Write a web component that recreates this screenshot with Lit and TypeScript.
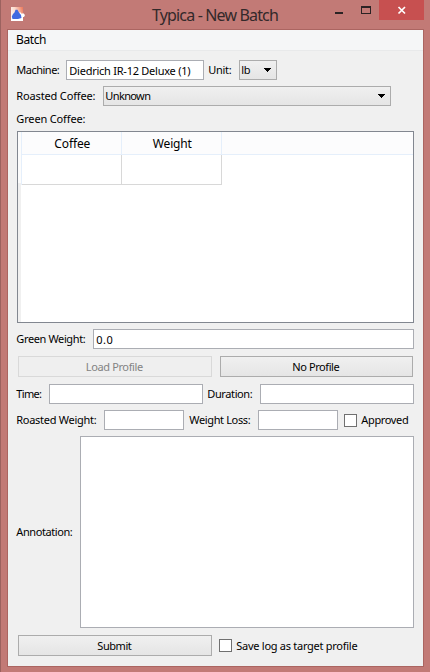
import { LitElement, html, css, svg } from "lit";
import { customElement, property } from "lit/decorators.js";

// A text run whose tracking is adjusted so that it fills a given width.
@customElement("fit-text")
class FitText extends LitElement {
  @property() text = "";
  @property({ type: Number }) w = 0;

  static styles = css`
    :host { display: inline-block; white-space: pre; flex: none; }
    .run { display: inline-block; }
  `;

  firstUpdated() {
    const run = this.renderRoot.querySelector(".run") as HTMLElement;
    const natural = run.getBoundingClientRect().width;
    run.style.letterSpacing = (this.w - natural) / this.text.length + "px";
    this.style.width = this.w + "px";
  }

  render() {
    return html`<span class="run">${this.text}</span>`;
  }
}

const t = (text: string, w: number) => html`<fit-text .text=${text} .w=${w}></fit-text>`;

const arrow = html`<svg class="arrow" width="7" height="4" viewBox="0 0 7 4" shape-rendering="crispEdges">
  ${svg`<path d="M0 0H7V1H6V2H5V3H4V4H3V3H2V2H1V1H0Z" fill="#000" />`}
</svg>`;

@customElement("app-root")
class AppRoot extends LitElement {
  static styles = css`
    * { box-sizing: border-box; }
    :host {
      display: block; width: 430px; height: 672px; overflow: hidden;
      font: 11px/14px "Noto Sans", "Open Sans", sans-serif; color: #000;
    }
    .window {
      width: 430px; height: 672px; background: #c27a76; border-left: 1px solid #9c625f;
      display: flex; flex-direction: column;
    }
    .titlebar { height: 29px; display: flex; align-items: flex-start; color: #33292a; flex: none; }
    .logo { display: block; margin: 7px 0 0 10px; }
    .title { font-size: 16px; line-height: 22px; margin: 4px 0 0 126px; }
    .controls { display: flex; margin-left: auto; margin-right: 5px; }
    .controls svg { display: block; }
    .client {
      margin-left: 6px; width: 417px; height: 638px; border: 1px solid #ab6561;
      background: #f0f0f0; display: flex; flex-direction: column; flex: none;
    }
    .menubar {
      height: 21px; background: #f5f6f7; border-bottom: 1px solid #e8e9ea; padding: 2px 0 0 8px;
      font-size: 12px; line-height: 16px; flex: none;
    }
    .form { padding: 9px 9px 0 9px; display: flex; flex-direction: column; }
    .form fit-text { margin-left: -0.7px; margin-right: 0.7px; }
    .row { display: flex; align-items: center; height: 20px; margin-bottom: 6px; flex: none; }
    .field { height: 20px; background: #fff; border: 1px solid #abadb3; padding: 3px 0 0 2px; line-height: 14px; flex: none; }
    .select {
      height: 20px; border: 1px solid #acacac; background: linear-gradient(#f0f0f0, #e5e5e5);
      display: flex; align-items: center; justify-content: space-between; padding: 0 5px 0 2px; flex: none;
    }
    .machine { width: 138px; margin-left: 6px; margin-right: 5px; padding-left: 3px; }
    .unit { width: 38px; margin-left: 7px; }
    .coffee { width: 288px; margin-left: 7px; }
    .heading { height: 14px; margin-bottom: 5px; }
    .table { width: 397px; height: 192px; border: 1px solid #828790; background: #fff; margin-bottom: 6px; flex: none; display: flex; }
    .gutter { width: 3px; background: #f0f0f0; }
    .gutter-head { height: 52px; background: #fcfcfc; border-bottom: 1px solid #f0f0f0; }
    .sheet { flex: 1; }
    .head { display: flex; height: 23px; border-bottom: 1px solid #e5effb; border-left: 1px solid #e5effb; background: #fcfcfd; font-size: 12px; }
    .head .cell { width: 100px; border-right: 1px solid #e5effb; display: flex; align-items: center; justify-content: center; }
    .head fit-text { margin: 2px 0 0 1.5px; }
    .body { display: flex; height: 30px; border-left: 1px solid #e5effb; }
    .body .cell { width: 100px; border-right: 1px solid #d8d8d8; border-bottom: 1px solid #d8d8d8; }
    .green { flex: 1; margin-left: 7px; padding-left: 3px; }
    .buttons { display: flex; gap: 8px; padding: 0 1px; margin: 1px 0 7px; align-items: center; height: 21px; flex: none; }
    .button {
      width: 194px; height: 21px; border: 1px solid #acacac; background: linear-gradient(#f0f0f0, #e5e5e5);
      display: flex; align-items: center; justify-content: center; flex: none;
    }
    .no-profile { width: 193px; }
    .disabled { background: #efefef; border-color: #d9d9d9; color: #838383; }
    .time { width: 154px; margin: 0 5px 0 7px; }
    .duration { width: 154px; margin-left: 7px; }
    .small { width: 80px; margin: 0 6px 0 7px; }
    .check { width: 13px; height: 13px; border: 1px solid #707070; background: #fff; margin-right: 5px; flex: none; }
    .note { height: 192px; margin-bottom: 6px; }
    .area { width: 334px; height: 192px; background: #fff; border: 1px solid #abadb3; margin-left: 7px; }
    .last { gap: 7px; }
    .save { display: flex; align-items: center; }
  `;

  render() {
    return html`
      <div class="window">
        <div class="titlebar">
          <svg class="logo" width="15" height="15" viewBox="0 0 15 15">
            <defs>
              <linearGradient id="sky" x1="0" y1="0.6" x2="1" y2="0.2">
                <stop offset="0" stop-color="#fff6f2" />
                <stop offset="0.45" stop-color="#fbd9cc" />
                <stop offset="1" stop-color="#ee7f62" />
              </linearGradient>
            </defs>
            <path d="M0 0H12V14H0Z" fill="url(#sky)" />
            <path d="M7 8L9 5L11 7L12 6L14 8L13 10L12 10V14H0V12Z" fill="#fff" />
            <path d="M4.5 2.8H6.5L8 5.5L10 8L10.5 11L7 12H1.5L0.8 9.5L2 7L3.5 5.5Z" fill="#4169e1" />
          </svg>
          <div class="title">${t("Typica - New Batch", 126)}</div>
          <div class="controls">
            <svg width="91" height="20" viewBox="0 0 91 20" shape-rendering="crispEdges">
              <rect x="1" y="12" width="8" height="2" fill="#2b2324" />
              <path d="M27 6H37V14H27ZM28 8V13H36V8Z" fill="#2b2324" fill-rule="evenodd" />
              <rect x="45" y="0" width="45" height="20" fill="#c75050" />
              <path d="M64.5 7L71 13.5M71 7L64.5 13.5" stroke="#fff" stroke-width="1.7" shape-rendering="auto" />
            </svg>
          </div>
        </div>
        <div class="client">
          <div class="menubar">${t("Batch", 30)}</div>
          <div class="form">
            <div class="row">
              ${t("Machine:", 43)}
              <div class="field machine">${t("Diedrich IR-12 Deluxe (1)", 121)}</div>
              ${t("Unit:", 23)}
              <div class="select unit">${t("lb", 9)}${arrow}</div>
            </div>
            <div class="row">
              ${t("Roasted Coffee:", 79)}
              <div class="select coffee">${t("Unknown", 45)}${arrow}</div>
            </div>
            <div class="heading">${t("Green Coffee:", 69)}</div>
            <div class="table">
              <div class="gutter"><div class="gutter-head"></div></div>
              <div class="sheet">
                <div class="head">
                  <div class="cell">${t("Coffee", 36)}</div>
                  <div class="cell">${t("Weight", 39)}</div>
                </div>
                <div class="body"><div class="cell"></div><div class="cell"></div></div>
              </div>
            </div>
            <div class="row">
              ${t("Green Weight:", 69)}
              <div class="field green">${t("0.0", 17)}</div>
            </div>
            <div class="buttons">
              <div class="button disabled">${t("Load Profile", 57)}</div>
              <div class="button no-profile">${t("No Profile", 47)}</div>
            </div>
            <div class="row">
              ${t("Time:", 25)}
              <div class="field time"></div>
              ${t("Duration:", 45)}
              <div class="field duration"></div>
            </div>
            <div class="row">
              ${t("Roasted Weight:", 80)}
              <div class="field small"></div>
              ${t("Weight Loss:", 61)}
              <div class="field small"></div>
              <div class="check"></div>
              ${t("Approved", 47)}
            </div>
            <div class="row note">
              ${t("Annotation:", 56)}
              <div class="area"></div>
            </div>
            <div class="buttons last">
              <div class="button">${t("Submit", 34)}</div>
              <div class="save"><div class="check"></div>${t("Save log as target profile", 121)}</div>
            </div>
          </div>
        </div>
      </div>
    `;
  }
}
